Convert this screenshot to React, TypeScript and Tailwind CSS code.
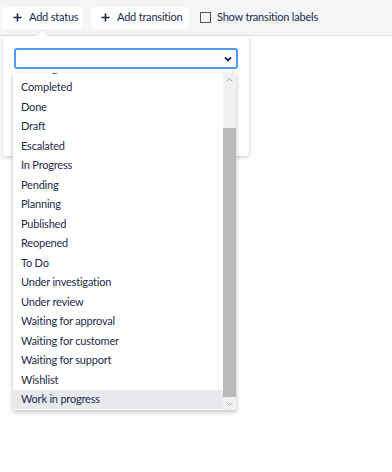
import React from 'react';

const statuses = [
  'Backlog',
  'Completed',
  'Done',
  'Draft',
  'Escalated',
  'In Progress',
  'Pending',
  'Planning',
  'Published',
  'Reopened',
  'To Do',
  'Under investigation',
  'Under review',
  'Waiting for approval',
  'Waiting for customer',
  'Waiting for support',
  'Wishlist',
  'Work in progress',
];

const Plus = () => (
  <svg width="9" height="9" viewBox="0 0 9 9" className="shrink-0">
    <path d="M4.5 0.5v8M0.5 4.5h8" stroke="#172b4d" strokeWidth="1.6" />
  </svg>
);

const App = () => {
  return (
    <div
      className="relative h-[472px] w-[392px] overflow-hidden bg-white text-[#172b4d] tracking-[-0.2px]"
      style={{ fontFamily: 'Lato, "Open Sans", sans-serif' }}
    >
      {/* Toolbar */}
      <div className="flex h-[36px] items-center gap-2 border-b border-[#e4e6ea] bg-[#f4f5f7] pl-[2px] whitespace-nowrap">
        <button className="flex h-[22px] w-[81px] items-center gap-[7px] rounded-[3px] bg-white pl-[11px] text-[11px]">
          <Plus />
          Add status
        </button>
        <button className="flex h-[22px] w-[98px] items-center gap-[7px] rounded-[3px] bg-white pl-[10px] text-[11px]">
          <Plus />
          Add transition
        </button>
        <label className="ml-[3px] flex items-center gap-[6px] text-[11px]">
          <span className="h-[11px] w-[11px] border border-[#555]" />
          Show transition labels
        </label>
      </div>

      {/* Popover */}
      <div className="absolute left-[3px] top-[36px] h-[120px] w-[246px] rounded-b-[3px] bg-white shadow-[0_1px_4px_rgba(9,30,66,0.25)]">
        <div className="absolute -top-[5px] left-[34px] h-[10px] w-[10px] rotate-45 border-l border-t border-[#e4e6ea] bg-white" />
        <div className="relative mx-[11px] mt-[12px] flex h-[21px] items-center justify-end rounded-[3px] border-2 border-[#4c9aff] bg-white pr-[4px]">
          <svg width="8" height="6" viewBox="0 0 8 6">
            <path d="M1 1.5l3 3 3-3" stroke="#172b4d" strokeWidth="1.8" fill="none" />
          </svg>
        </div>
      </div>

      {/* stray line of the canvas behind */}
      <div className="absolute left-[13px] top-[117px] h-[228px] w-px bg-black" />
      <div className="absolute left-[13px] top-[398px] h-[12px] w-px bg-black" />

      {/* Native select list */}
      <div className="absolute left-[13px] top-[73px] flex h-[337px] w-[223px] overflow-hidden bg-white shadow-[0_2px_5px_rgba(0,0,0,0.25)]">
        <div className="flex-1 overflow-hidden">
          <div className="-mt-[15px] text-[11px] text-[#1d2b4a]">
            {statuses.map((s) => (
              <div
                key={s}
                className={`flex h-[19.5px] items-center pl-[8px] ${
                  s === 'Work in progress' ? 'bg-[#e8e9ed]' : ''
                }`}
              >
                {s}
              </div>
            ))}
          </div>
        </div>
        <div className="flex w-[13px] flex-col bg-[#f1f1f1]">
          <div className="flex h-[13px] items-center justify-center">
            <svg width="7" height="4" viewBox="0 0 7 4">
              <path d="M0.5 3.5l3-3 3 3" stroke="#a3a3a3" fill="none" />
            </svg>
          </div>
          <div className="mt-[42px] flex-1 bg-[#bababa]" />
          <div className="flex h-[13px] items-center justify-center">
            <svg width="7" height="4" viewBox="0 0 7 4">
              <path d="M0.5 0.5l3 3 3-3" stroke="#a3a3a3" fill="none" />
            </svg>
          </div>
        </div>
      </div>
    </div>
  );
};

export default App;
